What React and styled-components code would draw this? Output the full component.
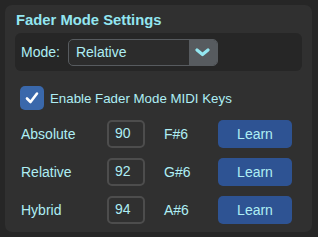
import React, { useState } from "react"
import styled, { createGlobalStyle } from "styled-components"

const GlobalStyle = createGlobalStyle`
    html, body {
        margin: 0;
        background: #262626;
        font-family: "Liberation Sans", Arial, sans-serif;
    }
`

const colors = {
    text: `#aeeef4`,
    title: `#93e6f0`,
    panel: `#303030`,
    well: `#262626`,
    border: `#575b5f`,
    blue: `#2e5393`,
    check: `#3a68ab`,
}

const Panel = styled.section`
    box-sizing: border-box;
    margin: 5px;
    width: 307px;
    height: 227px;
    padding: 5px 10px 0 10px;
    background: ${ colors.panel };
    border-radius: 7px;
    color: ${ colors.text };
`

const Title = styled.h2`
    margin: 0 0 0 1px;
    font-size: 14.8px;
    line-height: 20px;
    font-weight: bold;
    color: ${ colors.title };
`

const ModeBox = styled.div`
    display: flex;
    align-items: center;
    gap: 8px;
    height: 38px;
    margin-top: 3px;
    padding: 0 6px;
    background: ${ colors.well };
    border-radius: 6px;
    font-size: 14px;
`

const Select = styled.div`
    display: flex;
    box-sizing: border-box;
    width: 150px;
    height: 27px;
    border: 1.5px solid ${ colors.border };
    border-radius: 5px;
    overflow: hidden;
    background: #2c2c2c;
`

const SelectValue = styled.div`
    flex: 1;
    display: flex;
    align-items: center;
    padding-left: 7px;
    font-size: 14px;
`

const SelectArrow = styled.div`
    width: 28px;
    display: flex;
    align-items: center;
    justify-content: center;
    background: ${ colors.border };
`

const CheckRow = styled.label`
    display: flex;
    align-items: center;
    gap: 6px;
    margin: 15px 0 0 5px;
    font-size: 13.3px;
`

const CheckBox = styled.span`
    width: 24px;
    height: 24px;
    border-radius: 5px;
    background: ${ colors.check };
    display: flex;
    align-items: center;
    justify-content: center;
`

const KeyGrid = styled.div`
    display: grid;
    grid-template-columns: 86px 57px 54px 74px;
    row-gap: 10px;
    margin: 10px 0 0 6px;
    align-items: center;
    font-size: 14px;
`

const NumberBox = styled.div`
    box-sizing: border-box;
    width: 38px;
    height: 28px;
    padding: 3px 0 0 6px;
    border: 2px solid #4d4d4d;
    border-radius: 5px;
    font-size: 14px;
`

const LearnButton = styled.button`
    height: 28px;
    width: 74px;
    border: none;
    border-radius: 5px;
    background: ${ colors.blue };
    color: ${ colors.text };
    font-family: inherit;
    font-size: 14px;
    padding: 0;
`

const keys = [
    { name: `Absolute`, num: 90, note: `F#6` },
    { name: `Relative`, num: 92, note: `G#6` },
    { name: `Hybrid`, num: 94, note: `A#6` },
]

const App = () => {
    const [enabled] = useState(true)

    return (
        <>
            <GlobalStyle />
            <Panel>
                <Title>Fader Mode Settings</Title>
                <ModeBox>
                    <span>Mode:</span>
                    <Select>
                        <SelectValue>Relative</SelectValue>
                        <SelectArrow>
                            <svg width="15" height="10" viewBox="0 0 15 10">
                                <path d="M2 3 L7.5 7.5 L13 3" fill="none" stroke={ colors.title } strokeWidth="3.2" strokeLinecap="round" strokeLinejoin="round" />
                            </svg>
                        </SelectArrow>
                    </Select>
                </ModeBox>
                <CheckRow>
                    <CheckBox>
                        { enabled && (
                            <svg width="16" height="16" viewBox="0 0 16 16">
                                <path d="M3 8.5 L6.5 12 L13 3.5" fill="none" stroke="#fff" strokeWidth="2.6" strokeLinecap="round" strokeLinejoin="round" />
                            </svg>
                        ) }
                    </CheckBox>
                    Enable Fader Mode MIDI Keys
                </CheckRow>
                <KeyGrid>
                    { keys.map(k => (
                        <React.Fragment key={ k.name }>
                            <span>{ k.name }</span>
                            <NumberBox>{ k.num }</NumberBox>
                            <span>{ k.note }</span>
                            <LearnButton>Learn</LearnButton>
                        </React.Fragment>
                    )) }
                </KeyGrid>
            </Panel>
        </>
    )
}

export default App
